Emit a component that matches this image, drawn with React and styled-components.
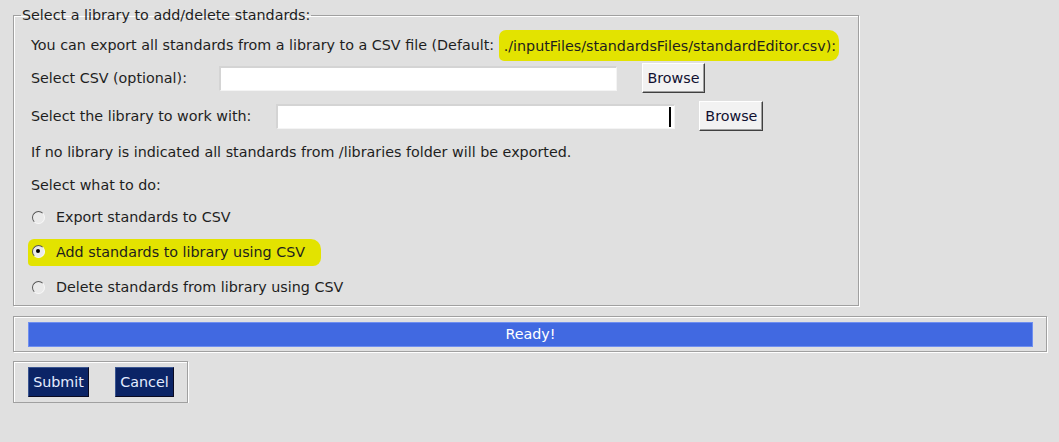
import React from "react";
import styled, { createGlobalStyle } from "styled-components";

const GlobalStyle = createGlobalStyle`
  html, body {
    margin: 0;
    padding: 0;
    background: #e0e0e0;
    font-family: "DejaVu Sans", Verdana, sans-serif;
    font-size: 14.3px;
    color: #1e1e1e;
  }
`;

const Page = styled.div`
  padding: 7px 0 0 13px;
  width: 1034px;
`;

const Group = styled.fieldset`
  width: 846px;
  box-sizing: border-box;
  margin: 0;
  padding: 0 0 3px 17px;
  border: 1px solid #a0a0a0;
  box-shadow: inset 1px 1px 0 #fff, 1px 1px 0 #fff;
`;

const Legend = styled.legend`
  margin-left: -10px;
  padding: 0 1px;
  line-height: 16px;
  color: #1e1e1e;
`;

const Row = styled.div`
  display: flex;
  align-items: center;
  height: 30px;
  margin-top: ${(p) => p.$gap || 0}px;
  white-space: pre;
`;

const Mark = styled.span`
  background: #e3e300;
  border-radius: 7px 10px 9px 5px;
  padding: 8px 3px 7px 5px;
`;

const Field = styled.div`
  display: flex;
  justify-content: flex-end;
  align-items: center;
  box-sizing: border-box;
  width: ${(p) => p.$w}px;
  height: 25px;
  margin-left: ${(p) => p.$ml}px;
  background: #fff;
  border-top: 2px solid #d4d4d4;
  border-left: 2px solid #d4d4d4;
  border-bottom: 1px solid #f4f4f4;
  border-right: 1px solid #f4f4f4;
  padding-right: 3px;
`;

const Caret = styled.span`
  width: 2px;
  height: 20px;
  background: #000;
`;

const BrowseButton = styled.button`
  box-sizing: border-box;
  width: ${(p) => p.$w}px;
  height: 30px;
  margin-left: ${(p) => p.$ml}px;
  padding: 0;
  font: inherit;
  color: #101030;
  background: #f2f2f2;
  border: 1px solid;
  border-color: #fff #404040 #404040 #fff;
  box-shadow: inset -1px -1px 0 #a0a0a0;
`;

const Radio = styled.span`
  position: relative;
  box-sizing: border-box;
  width: 13px;
  height: 13px;
  margin: 0 11px 0 1px;
  border-radius: 50%;
  border: 1.5px solid;
  border-color: #555 #f8f8f8 #f8f8f8 #555;
  background: #eaeaea;

  &::after {
    content: "";
    display: ${(p) => (p.$on ? "block" : "none")};
    position: absolute;
    left: 3px;
    top: 3px;
    width: 4px;
    height: 4px;
    border-radius: 50%;
    background: #000;
  }
`;

const RadioMark = styled.span`
  display: flex;
  align-items: center;
  margin-left: -3px;
  padding: 5px 16px 6px 3px;
  background: #e3e300;
  border-radius: 6px 10px 8px 4px;
`;

const Panel = styled.div`
  box-sizing: border-box;
  border: 1px solid #a0a0a0;
  box-shadow: inset 1px 1px 0 #fff, 1px 1px 0 #fff;
  margin-top: ${(p) => p.$mt}px;
`;

const Status = styled(Panel)`
  width: 1034px;
  padding: 5px 13px 4px 14px;
`;

const Bar = styled.div`
  height: 25px;
  box-sizing: border-box;
  background: #4169e1;
  border: 1px solid #6f8ff0;
  color: #fff;
  line-height: 23px;
  text-align: center;
`;

const Actions = styled(Panel)`
  width: 175px;
  display: flex;
  gap: 26px;
  padding: 5px 13px 5px 14px;
`;

const DarkButton = styled.button`
  box-sizing: border-box;
  width: ${(p) => p.$w}px;
  height: 30px;
  padding: 0;
  font: inherit;
  color: #e4ecff;
  background: #0b2466;
  border: 1px solid;
  border-color: #3a5590 #0a0a20 #0a0a20 #3a5590;
`;

const options = [
  { label: "Export standards to CSV" },
  { label: "Add standards to library using CSV", on: true },
  { label: "Delete standards from library using CSV" },
];

export default function App() {
  return (
    <Page>
      <GlobalStyle />
      <Group>
        <Legend>Select a library to add/delete standards:</Legend>
        <Row $gap={7}>
          {"You can export all standards from a library to a CSV file (Default: "}
          <Mark>./inputFiles/standardsFiles/standardEditor.csv):</Mark>
        </Row>
        <Row $gap={3}>
          Select CSV (optional):
          <Field $w={398} $ml={32} />
          <BrowseButton $w={63} $ml={25}>Browse</BrowseButton>
        </Row>
        <Row $gap={8}>
          Select the library to work with:
          <Field $w={399} $ml={25}>
            <Caret />
          </Field>
          <BrowseButton $w={64} $ml={24}>Browse</BrowseButton>
        </Row>
        <Row $gap={6}>
          If no library is indicated all standards from /libraries folder will be exported.
        </Row>
        <Row $gap={3}>Select what to do:</Row>
        {options.map((o, i) => (
          <Row key={o.label} $gap={i === 0 ? 2 : 5}>
            {o.on ? (
              <RadioMark>
                <Radio $on />
                {o.label}
              </RadioMark>
            ) : (
              <>
                <Radio />
                {o.label}
              </>
            )}
          </Row>
        ))}
      </Group>
      <Status $mt={10}>
        <Bar>Ready!</Bar>
      </Status>
      <Actions $mt={9}>
        <DarkButton $w={61}>Submit</DarkButton>
        <DarkButton $w={59}>Cancel</DarkButton>
      </Actions>
    </Page>
  );
}
